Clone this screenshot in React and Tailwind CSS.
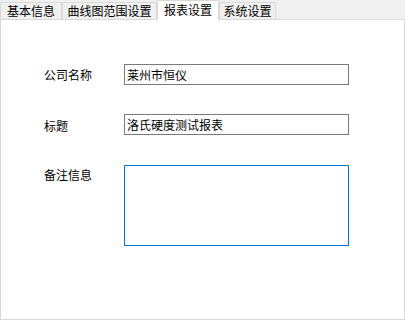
import React from 'react';

const font = { fontFamily: '"Noto Sans CJK SC", "Liberation Sans", sans-serif' };

const tabs = [
  { label: '基本信息', w: 'w-[62px]' },
  { label: '曲线图范围设置', w: 'w-[95px]' },
  { label: '报表设置', w: 'w-[62px]', active: true },
  { label: '系统设置', w: 'w-[57px]' },
];

export default function App() {
  return (
    <div className="w-[405px] h-[320px] bg-[#f0f0f0] flex flex-col text-[12px] text-black" style={font}>
      {/* Tab strip */}
      <div className="flex items-end h-[19px] relative z-10">
        {tabs.map((t) =>
          t.active ? (
            <div
              key={t.label}
              className={`${t.w} h-[20px] -mb-px bg-white border border-b-0 border-[#d9d9d9] flex items-start justify-center leading-[16px] pt-px`}
            >
              {t.label}
            </div>
          ) : (
            <div
              key={t.label}
              className={`${t.w} h-[17px] bg-[#f0f0f0] border border-b-0 border-[#d9d9d9] flex items-center justify-center leading-[16px]`}
            >
              {t.label}
            </div>
          )
        )}
      </div>

      {/* Panel */}
      <div className="flex-1 bg-white border border-[#d9d9d9] pl-[43px] pt-[44px]">
        <div className="flex items-center h-[21px]">
          <div className="w-[80px] leading-[14px]">公司名称</div>
          <div className="w-[225px] h-[21px] border border-[#7a7a7a] px-[2px] flex items-center leading-[14px]">
            莱州市恒仪
          </div>
        </div>

        <div className="flex items-center h-[21px] mt-[29px]">
          <div className="w-[80px] leading-[14px] pt-[3px]">标题</div>
          <div className="w-[225px] h-[21px] border border-[#7a7a7a] px-[2px] flex items-center leading-[14px]">
            洛氏硬度测试报表
          </div>
        </div>

        <div className="flex items-start mt-[30px]">
          <div className="w-[80px] leading-[14px] pt-[3px]">备注信息</div>
          <div className="w-[225px] h-[81px] border border-[#0078d7] bg-white" />
        </div>
      </div>
    </div>
  );
}
